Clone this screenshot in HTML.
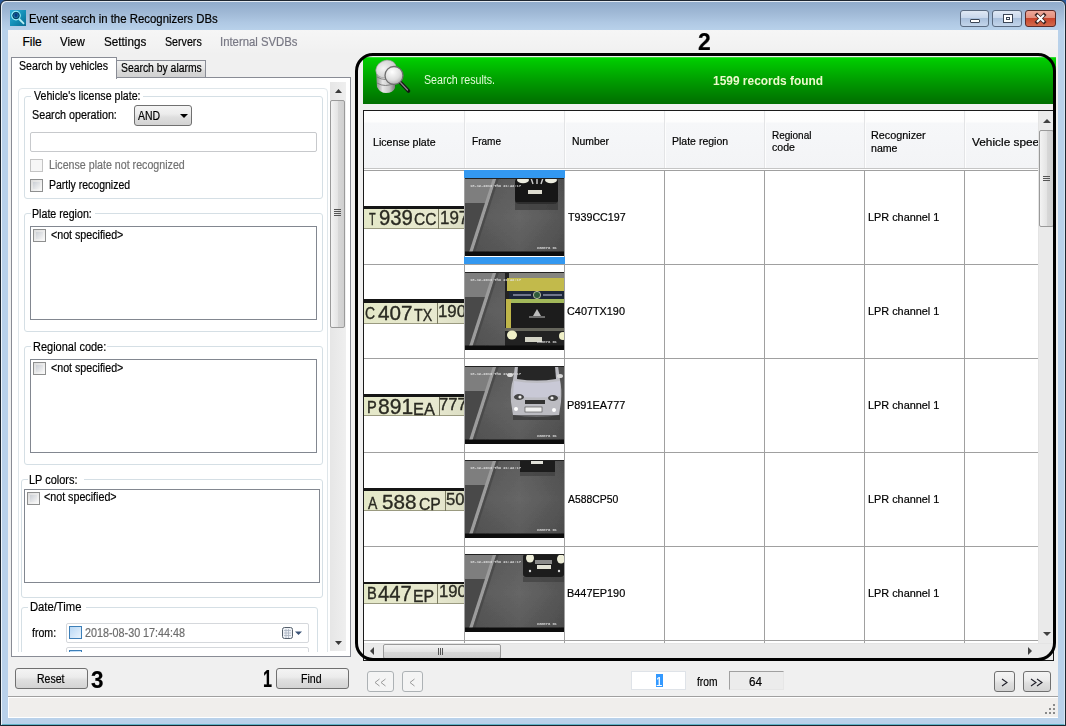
<!DOCTYPE html>
<html><head><meta charset="utf-8">
<style>
*{box-sizing:border-box}
html,body{margin:0;padding:0}
body{width:1066px;height:726px;position:relative;overflow:hidden;background:#2a5a9a;font-family:"Liberation Sans",sans-serif;font-size:12px;color:#000}
.a{position:absolute}
.t{position:absolute;white-space:nowrap;line-height:1;transform-origin:0 0;-webkit-text-stroke:0.2px currentColor}
#frame{left:0;top:0;width:1066px;height:726px;border:1px solid #1d2630;border-radius:6px 6px 0 0;box-shadow:inset 1px 1px 0 rgba(255,255,255,.75),inset -1px 0 0 rgba(255,255,255,.4),inset 0 -1px 0 #62b4c8;background:linear-gradient(#90abcb 0,#93aecd 3px,#a0b9d6 12px,#b0c9e4 22px,#b8d1ea 29px,#b9d1ea 100%)}
#client{left:8px;top:30px;width:1050px;height:688px;background:#f0f0f0}
.btnw{border:1px solid #5a6a80;border-radius:3px}
.chk{position:absolute;width:13px;height:13px;border:1px solid #8e8f8f;background:linear-gradient(135deg,#dcdcdc,#fafafa)}
.chk:after{content:"";position:absolute;left:2px;top:2px;width:7px;height:7px;background:linear-gradient(135deg,#cbcfd5,#f4f4f4)}
.nx:after{display:none}
.gb{position:absolute;border:1px solid #d5dfe5;border-radius:3px}
.lb{position:absolute;border:1px solid #828790;background:#fff}
.btn{position:absolute;border:1px solid #707070;border-radius:3px;background:linear-gradient(#f4f4f4 0,#ececec 42%,#dfdfdf 58%,#d3d3d3 100%)}
</style></head><body>
<div id="frame" class="a"></div>
<div class="a" style="left:10px;top:10px;width:16px;height:16px;background:linear-gradient(135deg,#32b0d8,#1590b8 50%,#0a6c92);">
<svg width="16" height="16" style="position:absolute;left:0;top:0"><circle cx="6" cy="5.6" r="4.3" fill="none" stroke="#9ff0f8" stroke-width="1.1"/><circle cx="6" cy="5.6" r="3.1" fill="#1a78a0" stroke="#0b3e60" stroke-width="1"/><path d="M4.6 3.6h2.8v2.4l-1.4 1.6-1.4-1.6z" fill="#0a3a8a"/><line x1="9.2" y1="9" x2="14" y2="13.8" stroke="#b8f0f4" stroke-width="1.8"/></svg>
</div>
<div class="t" style="left:29.25px;top:12.94px;font-size:12px;transform:scaleX(0.9495)">Event search in the Recognizers DBs</div>
<div class="a btnw" style="left:960px;top:10px;width:29px;height:17px;background:linear-gradient(#dfe8f4 0,#c9d8ec 45%,#aac0dc 50%,#c3d5ea 100%)"><div class="a" style="left:9px;top:8px;width:10px;height:4px;background:#fff;border:1px solid #3b4656;border-radius:1px"></div></div>
<div class="a btnw" style="left:992px;top:10px;width:30px;height:17px;background:linear-gradient(#dfe8f4 0,#c9d8ec 45%,#aac0dc 50%,#c3d5ea 100%)"><div class="a" style="left:10px;top:3px;width:10px;height:9px;background:#fff;border:1px solid #3b4656"><div class="a" style="left:2px;top:2px;width:4px;height:3px;border:1px solid #3b4656"></div></div></div>
<div class="a" style="left:1025px;top:10px;width:31px;height:17px;border:1px solid #5b2a28;border-radius:3px;background:linear-gradient(#eea899 0,#e3907e 45%,#c9452c 50%,#d46a4c 100%)">
<svg width="29" height="15" style="position:absolute;left:0;top:0"><path d="M11 4 L18 11 M18 4 L11 11" stroke="#3c2320" stroke-width="3.6" stroke-linecap="square"/><path d="M11 4 L18 11 M18 4 L11 11" stroke="#fff" stroke-width="2"/></svg>
</div>
<div id="client" class="a"></div>
<div class="a" style="left:8px;top:30px;width:1050px;height:24px;background:linear-gradient(#f6f6f6,#f2f2f2 70%,#f0f0f0)"></div>
<div class="t" style="left:22.40px;top:35.64px;font-size:12px">File</div>
<div class="t" style="left:60.00px;top:35.64px;font-size:12px;transform:scaleX(0.9585)">View</div>
<div class="t" style="left:104.01px;top:35.64px;font-size:12px;transform:scaleX(0.9741)">Settings</div>
<div class="t" style="left:165.16px;top:35.64px;font-size:12px;transform:scaleX(0.8889)">Servers</div>
<div class="t" style="left:219.94px;top:35.64px;font-size:12px;color:#787884;transform:scaleX(0.9441)">Internal SVDBs</div>
<div class="a" style="left:116px;top:60px;width:90px;height:18px;border:1px solid #898c95;border-bottom:none;background:linear-gradient(#f2f2f2,#e3e3e3 50%,#dadada 51%,#d0d0d0)"></div>
<div class="t" style="left:120.97px;top:62.34px;font-size:12px;transform:scaleX(0.8649)">Search by alarms</div>
<div class="a" style="left:11px;top:77px;width:340px;height:580px;border:1px solid #898c95;background:#fff"></div>
<div class="a" style="left:11px;top:57px;width:106px;height:22px;border:1px solid #898c95;border-bottom:none;background:#fff"></div>
<div class="t" style="left:19.26px;top:60.44px;font-size:12px;transform:scaleX(0.8841)">Search by vehicles</div>
<div class="a" style="left:12px;top:78px;width:338px;height:574px;overflow:hidden">
<div class="a" style="left:6px;top:10px;width:310px;height:600px;border:1px solid #dfe6ea;border-radius:4px"></div>
<div class="gb" style="left:12px;top:18px;width:299px;height:103px"></div>
<div class="a" style="left:19px;top:12px;width:112px;height:12px;background:#fff"></div>
<div class="t" style="left:21.80px;top:11.74px;font-size:12px;transform:scaleX(0.8847)">Vehicle's license plate:</div>
<div class="t" style="left:19.65px;top:30.54px;font-size:12px;transform:scaleX(0.8956)">Search operation:</div>
<div class="a" style="left:122px;top:27px;width:58px;height:21px;border:1px solid #707070;border-radius:3px;background:linear-gradient(#f4f4f4 0,#ececec 42%,#dfdfdf 58%,#d3d3d3 100%)"></div>
<div class="t" style="left:126.30px;top:31.84px;font-size:12px;transform:scaleX(0.8727)">AND</div>
<div class="a" style="left:168px;top:36px;width:0;height:0;border-left:4px solid transparent;border-right:4px solid transparent;border-top:4px solid #000"></div>
<div class="a" style="left:18px;top:54px;width:287px;height:20px;border:1px solid #c7c9cc;border-radius:2px;background:#fff"></div>
<div class="chk nx" style="left:18px;top:81px;border-color:#c4c4c4;background:#f6f6f6"></div>
<div class="t" style="left:36.71px;top:81.34px;font-size:12px;color:#727272;transform:scaleX(0.8887)">License plate not recognized</div>
<div class="chk" style="left:18px;top:101px"></div>
<div class="t" style="left:36.73px;top:101.34px;font-size:12px;transform:scaleX(0.8748)">Partly recognized</div>
<div class="gb" style="left:12px;top:135px;width:299px;height:119px"></div>
<div class="a" style="left:19px;top:130px;width:64px;height:10px;background:#fff"></div>
<div class="t" style="left:20.31px;top:129.64px;font-size:12px;transform:scaleX(0.8874)">Plate region:</div>
<div class="lb" style="left:18px;top:148px;width:287px;height:94px"></div>
<div class="chk" style="left:21px;top:151px"></div>
<div class="t" style="left:38.94px;top:150.64px;font-size:12px;transform:scaleX(0.8885)">&lt;not specified&gt;</div>
<div class="gb" style="left:12px;top:268px;width:299px;height:119px"></div>
<div class="a" style="left:19px;top:263px;width:76px;height:10px;background:#fff"></div>
<div class="t" style="left:20.68px;top:263.04px;font-size:12px;transform:scaleX(0.9154)">Regional code:</div>
<div class="lb" style="left:18px;top:281px;width:287px;height:94px"></div>
<div class="chk" style="left:21px;top:284px"></div>
<div class="t" style="left:38.94px;top:284.34px;font-size:12px;transform:scaleX(0.8885)">&lt;not specified&gt;</div>
<div class="gb" style="left:9px;top:401px;width:302px;height:119px"></div>
<div class="a" style="left:16px;top:396px;width:56px;height:10px;background:#fff"></div>
<div class="t" style="left:17.49px;top:395.64px;font-size:12px;transform:scaleX(0.9137)">LP colors:</div>
<div class="lb" style="left:12px;top:411px;width:296px;height:94px"></div>
<div class="chk" style="left:15px;top:414px"></div>
<div class="t" style="left:32.34px;top:413.44px;font-size:12px;transform:scaleX(0.8922)">&lt;not specified&gt;</div>
<div class="gb" style="left:9px;top:529px;width:297px;height:80px"></div>
<div class="a" style="left:16px;top:524px;width:58px;height:10px;background:#fff"></div>
<div class="t" style="left:17.66px;top:523.34px;font-size:12px;transform:scaleX(0.9368)">Date/Time</div>
<div class="t" style="left:20.09px;top:548.54px;font-size:12px;transform:scaleX(0.8804)">from:</div>
<div class="a" style="left:54px;top:545px;width:243px;height:20px;border:1px solid #d5d8dc;border-radius:2px;background:#fff"></div>
<div class="a" style="left:57px;top:548px;width:13px;height:13px;border:1px solid #3d7fb8;background:linear-gradient(135deg,#b9d8f5,#eaf4fd)"></div>
<div class="t" style="left:72.54px;top:548.84px;font-size:12px;color:#6d6d6d;transform:scaleX(0.8980)">2018-08-30 17:44:48</div>
<svg class="a" style="left:269px;top:548px" width="24" height="14"><rect x="1.5" y="1.5" width="10" height="11" rx="2" fill="#eef1f5" stroke="#55606c"/><path d="M3 4.5h7M3 7h7M3 9.5h7M5 3v9M7.5 3v9" stroke="#aab4c2" stroke-width="0.8"/><path d="M14 5.5h7l-3.5 3.5z" fill="#3a5276"/></svg>
<div class="a" style="left:54px;top:569px;width:243px;height:20px;border:1px solid #d5d8dc;border-radius:2px;background:#fff"></div>
<div class="a" style="left:57px;top:572px;width:13px;height:13px;border:1px solid #3d7fb8;background:linear-gradient(135deg,#b9d8f5,#eaf4fd)"></div>
<div class="a" style="left:318px;top:4px;width:16px;height:569px;background:linear-gradient(90deg,#e6e6e6,#efefef)"></div>
<svg class="a" style="left:322px;top:10px" width="9" height="6"><path d="M1 5 L4.5 1 L8 5z" fill="#3a3a3a"/></svg>
<div class="a" style="left:318px;top:22px;width:15px;height:228px;border:1px solid #9a9a9a;border-radius:2px;background:linear-gradient(90deg,#f3f3f3,#e4e4e4 50%,#d8d8d8 51%,#cfcfcf)"></div>
<div class="a" style="left:322px;top:131px;width:7px;height:7px;background:repeating-linear-gradient(#555 0 1px,transparent 1px 2px)"></div>
<svg class="a" style="left:322px;top:562px" width="9" height="6"><path d="M1 1 L8 1 L4.5 5z" fill="#3a3a3a"/></svg>
</div>
<div class="btn" style="left:15px;top:668px;width:73px;height:21px"></div>
<div class="t" style="left:36.82px;top:672.84px;font-size:12px;transform:scaleX(0.8760)">Reset</div>
<div class="btn" style="left:276px;top:668px;width:73px;height:21px"></div>
<div class="t" style="left:301.32px;top:672.84px;font-size:12px;transform:scaleX(0.8837)">Find</div>
<div class="t" style="left:90.53px;top:667.68px;font-size:24px;font-weight:bold;transform:scaleX(0.9333)">3</div>
<div class="t" style="left:262.89px;top:666.68px;font-size:24px;font-weight:bold;transform:scaleX(0.6756)">1</div>
<div class="a" style="left:8px;top:696px;width:1050px;height:1px;background:#a0a0a0"></div>
<div class="a" style="left:8px;top:697px;width:1050px;height:21px;background:#f0eeec;border:1px solid #fff;border-right:none"></div>

<div class="a" style="left:363px;top:57px;width:693px;height:47px;background:linear-gradient(#6be06b 0,#00d800 1px,#00c800 4px,#009a00 25px,#007000 46px)"></div>
<svg class="a" style="left:372px;top:58px" width="42" height="38">
 <defs><linearGradient id="cy" x1="0" x2="1"><stop offset="0" stop-color="#8a8a8a"/><stop offset="0.35" stop-color="#e8e8e8"/><stop offset="0.7" stop-color="#c8c8c8"/><stop offset="1" stop-color="#7a7a7a"/></linearGradient>
 <radialGradient id="gl" cx="0.4" cy="0.3" r="0.75"><stop offset="0" stop-color="#ffffff"/><stop offset="0.6" stop-color="#dedede"/><stop offset="1" stop-color="#a8a8a8"/></radialGradient>
 <radialGradient id="tp" cx="0.4" cy="0.4" r="0.7"><stop offset="0" stop-color="#f4f4f4"/><stop offset="1" stop-color="#c4c4c4"/></radialGradient></defs>
 <path d="M4 12 L5 29 Q8 35 14 35 Q21 35 23 30 L23 12z" fill="url(#cy)"/>
 <path d="M5 19 Q13 24 23 19 M5 25 Q13 30 23 25" fill="none" stroke="#777" stroke-width="0.9"/>
 <ellipse cx="14" cy="11" rx="10.5" ry="8.5" transform="rotate(-25 14 11)" fill="url(#tp)" stroke="#9a9a9a" stroke-width="0.6"/>
 <line x1="28" y1="24" x2="36.5" y2="33" stroke="#141414" stroke-width="3.6" stroke-linecap="round"/>
 <line x1="28" y1="24" x2="35.5" y2="32" stroke="#8a8a8a" stroke-width="1.2" stroke-linecap="round"/>
 <circle cx="22" cy="17.5" r="9" fill="url(#gl)" stroke="#6e6e6e" stroke-width="1.3"/>
</svg>
<div class="t" style="left:423.96px;top:73.84px;font-size:12px;color:#e2fbd8;transform:scaleX(0.8879);-webkit-text-stroke:0">Search results.</div>
<div class="t" style="left:712.75px;top:75.44px;font-size:12px;color:#ecf9cc;font-weight:bold;transform:scaleX(0.9943);-webkit-text-stroke:0">1599 records found</div>
<div class="a" style="left:363px;top:110px;width:691px;height:551px;border:1px solid #1a1a1a;background:#fff;overflow:hidden">
 <div class="a" style="left:0;top:0;width:674px;height:57px;background:linear-gradient(#fefefe 0,#fdfdfd 11px,#f6f7f9 12px,#f3f4f6 56px)"></div>
 <div class="a" style="left:0;top:57px;width:674px;height:1px;background:#c5c5c5"></div>
<div class="t" style="left:8.56px;top:25.59px;font-size:11px;transform:scaleX(0.9654)">License plate</div>
<div class="t" style="left:107.70px;top:25.39px;font-size:11px;transform:scaleX(0.9152)">Frame</div>
<div class="t" style="left:207.97px;top:25.39px;font-size:11px;transform:scaleX(0.9443)">Number</div>
<div class="t" style="left:307.76px;top:25.29px;font-size:11px;transform:scaleX(0.9558)">Plate region</div>
<div class="t" style="left:407.61px;top:18.69px;font-size:11px;transform:scaleX(0.9075)">Regional</div>
<div class="t" style="left:407.92px;top:31.09px;font-size:11px;transform:scaleX(0.9617)">code</div>
<div class="t" style="left:507.34px;top:18.59px;font-size:11px;transform:scaleX(0.9831)">Recognizer</div>
<div class="t" style="left:507.08px;top:31.79px;font-size:11px;transform:scaleX(0.9638)">name</div>
<div class="t" style="left:608.30px;top:25.89px;font-size:11px;transform:scaleX(1.0775)">Vehicle speed</div>
<div class="a" style="left:100px;top:0;width:1px;height:57px;background:#e3e4e6;box-shadow:1px 0 0 #fdfdfd"></div>
<div class="a" style="left:200px;top:0;width:1px;height:57px;background:#e3e4e6;box-shadow:1px 0 0 #fdfdfd"></div>
<div class="a" style="left:300px;top:0;width:1px;height:57px;background:#e3e4e6;box-shadow:1px 0 0 #fdfdfd"></div>
<div class="a" style="left:400px;top:0;width:1px;height:57px;background:#e3e4e6;box-shadow:1px 0 0 #fdfdfd"></div>
<div class="a" style="left:500px;top:0;width:1px;height:57px;background:#e3e4e6;box-shadow:1px 0 0 #fdfdfd"></div>
<div class="a" style="left:600px;top:0;width:1px;height:57px;background:#e3e4e6;box-shadow:1px 0 0 #fdfdfd"></div>
<div class="a" style="left:0;top:59px;width:674px;height:1px;background:#a0a0a0"></div>
<div class="a" style="left:0;top:153px;width:674px;height:1px;background:#a0a0a0"></div>
<div class="a" style="left:0;top:247px;width:674px;height:1px;background:#a0a0a0"></div>
<div class="a" style="left:0;top:341px;width:674px;height:1px;background:#a0a0a0"></div>
<div class="a" style="left:0;top:435px;width:674px;height:1px;background:#a0a0a0"></div>
<div class="a" style="left:0;top:529px;width:674px;height:1px;background:#a0a0a0"></div>
<div class="a" style="left:100px;top:59px;width:1px;height:480px;background:#a0a0a0"></div>
<div class="a" style="left:200px;top:59px;width:1px;height:480px;background:#a0a0a0"></div>
<div class="a" style="left:300px;top:59px;width:1px;height:480px;background:#a0a0a0"></div>
<div class="a" style="left:400px;top:59px;width:1px;height:480px;background:#a0a0a0"></div>
<div class="a" style="left:500px;top:59px;width:1px;height:480px;background:#a0a0a0"></div>
<div class="a" style="left:600px;top:59px;width:1px;height:480px;background:#a0a0a0"></div>
<div class="a" style="left:0;top:94px;width:100px;height:26px;overflow:hidden"><div class="a" style="left:0;top:1.0px;width:100px;height:2.5px;background:#151515"></div><div class="a" style="left:0;top:3.5px;width:100px;height:20.5px;background:linear-gradient(90deg,#e4e8c8,#e6e8cc 40%,#e8e9d0 70%,#dcdec4);border-bottom:1px solid #9a9a80"></div><div class="a" style="left:74.4px;top:3.5px;width:1px;height:20.5px;background:#7a7a60"></div><div class="t" style="left:5.06px;top:6.27px;font-size:17.4px;color:#2a2a22;transform:scaleX(0.6278);-webkit-text-stroke:0.35px #2a2a22">T</div>
<div class="t" style="left:14.66px;top:2.80px;font-size:21.5px;color:#2a2a22;transform:scaleX(0.9446);-webkit-text-stroke:0.35px #2a2a22">939</div>
<div class="t" style="left:49.92px;top:6.27px;font-size:17.4px;color:#2a2a22;transform:scaleX(0.8936);-webkit-text-stroke:0.35px #2a2a22">CC</div>
<div class="t" style="left:76.21px;top:3.68px;font-size:18.1px;color:#2a2a22;transform:scaleX(0.9369);-webkit-text-stroke:0.35px #2a2a22">197</div>
</div>
<div class="a" style="left:100px;top:59px;width:101px;height:8px;background:#3398f0"></div>
<div class="a" style="left:100px;top:146px;width:101px;height:7px;background:#3398f0"></div>
<div class="a" style="left:101px;top:67px;width:99px;height:78px"><svg width="99" height="78" viewBox="0 0 99 78" style="position:absolute;left:0;top:0"><defs><linearGradient id="rd0" x1="0" y1="0" x2="1" y2="0"><stop offset="0" stop-color="#575757"/><stop offset="0.55" stop-color="#666"/><stop offset="1" stop-color="#555"/></linearGradient>
<linearGradient id="rv0" x1="0" y1="0" x2="0" y2="1"><stop offset="0" stop-color="#000" stop-opacity="0.08"/><stop offset="0.5" stop-color="#000" stop-opacity="0"/><stop offset="1" stop-color="#000" stop-opacity="0.12"/></linearGradient>
<filter id="bl0" x="-5%" y="-5%" width="110%" height="110%"><feGaussianBlur stdDeviation="0.5"/></filter></defs>
<g filter="url(#bl0)">
<rect x="0" y="0" width="99" height="78" fill="url(#rd0)"/>
<rect x="0" y="0" width="99" height="78" fill="url(#rv0)"/>
<path d="M0 0 H29 L21 25 H0z" fill="#7e7e7e"/>
<path d="M0 25 H21 L5 76 H0z" fill="#4a4a4a"/>
<path d="M28 0 L31.5 0 L7 76 L3.5 76z" fill="#9c9c9c"/>
<path d="M31.5 0 L34 0 L9.5 76 L7 76z" fill="#454545" opacity="0.7"/>
<rect x="50" y="0" width="43" height="26" rx="4" fill="#161616"/>
<rect x="50" y="24" width="43" height="8" fill="#3a3a3a" opacity="0.7"/>
<ellipse cx="58" cy="2" rx="6" ry="3.2" fill="#ececdf"/><ellipse cx="86" cy="2" rx="6" ry="3.2" fill="#ececdf"/>
<path d="M66 0 L68 6 M72 0 L72 6 M78 0 L76 6" stroke="#cfcfcf" stroke-width="1.4"/>
<rect x="63" y="12" width="14" height="4" fill="#dedcd0"/><rect x="0" y="73.5" width="99" height="4.5" fill="#0c0c0c"/>
<rect x="0" y="0" width="99" height="1" fill="#222"/>
</g>
<text x="5" y="9" font-family="Liberation Mono" font-size="3.9" font-weight="bold" fill="#e4e4e4" opacity="0.9" textLength="51">18-12-2019 Thu 21:42:17</text>
<text x="72" y="70.5" font-family="Liberation Mono" font-size="4" font-weight="bold" fill="#e8e8e8" opacity="0.85" textLength="20">Camera 01</text>
</svg></div>
<div class="t" style="left:203.77px;top:101.27px;font-size:11.5px;transform:scaleX(0.9306)">T939CC197</div>
<div class="t" style="left:503.67px;top:101.27px;font-size:11.5px;transform:scaleX(0.9459)">LPR channel 1</div>
<div class="a" style="left:0;top:186.5px;width:100px;height:26px;overflow:hidden"><div class="a" style="left:0;top:1.0px;width:100px;height:4.5px;background:#151515"></div><div class="a" style="left:0;top:5.5px;width:100px;height:20.5px;background:linear-gradient(90deg,#e4e8c8,#e6e8cc 40%,#e8e9d0 70%,#dcdec4);border-bottom:1px solid #9a9a80"></div><div class="a" style="left:72.6px;top:5.5px;width:1px;height:20.5px;background:#7a7a60"></div><div class="t" style="left:1.26px;top:7.09px;font-size:16.2px;color:#2a2a22;transform:scaleX(0.8585);-webkit-text-stroke:0.35px #2a2a22">C</div>
<div class="t" style="left:13.51px;top:4.44px;font-size:21.1px;color:#2a2a22;transform:scaleX(0.9791);-webkit-text-stroke:0.35px #2a2a22">407</div>
<div class="t" style="left:50.37px;top:9.49px;font-size:16.2px;color:#2a2a22;transform:scaleX(0.8805);-webkit-text-stroke:0.35px #2a2a22">TX</div>
<div class="t" style="left:73.69px;top:6.76px;font-size:16.0px;color:#2a2a22;transform:scaleX(1.0505);-webkit-text-stroke:0.35px #2a2a22">190</div>
</div>
<div class="a" style="left:101px;top:161px;width:99px;height:78px"><svg width="99" height="78" viewBox="0 0 99 78" style="position:absolute;left:0;top:0"><defs><linearGradient id="rd1" x1="0" y1="0" x2="1" y2="0"><stop offset="0" stop-color="#575757"/><stop offset="0.55" stop-color="#666"/><stop offset="1" stop-color="#555"/></linearGradient>
<linearGradient id="rv1" x1="0" y1="0" x2="0" y2="1"><stop offset="0" stop-color="#000" stop-opacity="0.08"/><stop offset="0.5" stop-color="#000" stop-opacity="0"/><stop offset="1" stop-color="#000" stop-opacity="0.12"/></linearGradient>
<filter id="bl1" x="-5%" y="-5%" width="110%" height="110%"><feGaussianBlur stdDeviation="0.5"/></filter></defs>
<g filter="url(#bl1)">
<rect x="0" y="0" width="99" height="78" fill="url(#rd1)"/>
<rect x="0" y="0" width="99" height="78" fill="url(#rv1)"/>
<path d="M0 0 H29 L21 25 H0z" fill="#7e7e7e"/>
<path d="M0 25 H21 L5 76 H0z" fill="#4a4a4a"/>
<path d="M28 0 L31.5 0 L7 76 L3.5 76z" fill="#9c9c9c"/>
<path d="M31.5 0 L34 0 L9.5 76 L7 76z" fill="#454545" opacity="0.7"/>
<rect x="40" y="0" width="59" height="78" fill="#242424"/>
<rect x="44" y="0" width="55" height="6" fill="#858580"/>
<path d="M42 6 H99 V19 H42z" fill="#c2ba4c"/>
<rect x="44" y="19" width="55" height="8" fill="#1f2838"/>
<circle cx="72" cy="23" r="3.6" fill="#2e5a3a" stroke="#d4d4b8" stroke-width="0.8"/>
<path d="M48 23 H66 M78 23 H97" stroke="#8a90a8" stroke-width="1.6"/>
<rect x="42" y="27" width="57" height="4" fill="#a2b85a"/>
<rect x="41" y="27" width="5" height="30" fill="#bfb648"/>
<rect x="46" y="31" width="53" height="25" fill="#1c1c1c"/>
<path d="M68 44 L72 37 L76 44z" fill="#bdbdbd"/><path d="M64 45 H80" stroke="#bdbdbd" stroke-width="1"/>
<rect x="40" y="56" width="59" height="3" fill="#66665c"/>
<ellipse cx="47" cy="63" rx="5" ry="4.5" fill="#f0f0c8"/>
<ellipse cx="98" cy="64" rx="4" ry="4" fill="#f0f0c8"/>
<rect x="60" y="65" width="17" height="5" fill="#d4d4c6"/><rect x="0" y="73.5" width="99" height="4.5" fill="#0c0c0c"/>
<rect x="0" y="0" width="99" height="1" fill="#222"/>
</g>
<text x="5" y="9" font-family="Liberation Mono" font-size="3.9" font-weight="bold" fill="#e4e4e4" opacity="0.9" textLength="51">18-12-2019 Thu 21:42:17</text>
<text x="72" y="70.5" font-family="Liberation Mono" font-size="4" font-weight="bold" fill="#e8e8e8" opacity="0.85" textLength="20">Camera 01</text>
</svg></div>
<div class="t" style="left:203.41px;top:195.27px;font-size:11.5px;transform:scaleX(0.9441)">C407TX190</div>
<div class="t" style="left:503.67px;top:195.27px;font-size:11.5px;transform:scaleX(0.9459)">LPR channel 1</div>
<div class="a" style="left:0;top:282px;width:100px;height:26px;overflow:hidden"><div class="a" style="left:0;top:1.0px;width:100px;height:3.2px;background:#151515"></div><div class="a" style="left:0;top:4.2px;width:100px;height:19.3px;background:linear-gradient(90deg,#e4e8c8,#e6e8cc 40%,#e8e9d0 70%,#dcdec4);border-bottom:1px solid #9a9a80"></div><div class="a" style="left:74.6px;top:4.2px;width:1px;height:19.3px;background:#7a7a60"></div><div class="t" style="left:2.77px;top:6.09px;font-size:16.2px;color:#2a2a22;transform:scaleX(0.9043);-webkit-text-stroke:0.35px #2a2a22">P</div>
<div class="t" style="left:13.75px;top:3.35px;font-size:21.8px;color:#2a2a22;transform:scaleX(0.9658);-webkit-text-stroke:0.35px #2a2a22">891</div>
<div class="t" style="left:49.43px;top:8.49px;font-size:16.2px;color:#2a2a22;transform:scaleX(1.0123);-webkit-text-stroke:0.35px #2a2a22">EA</div>
<div class="t" style="left:75.14px;top:4.49px;font-size:16.9px;color:#2a2a22;transform:scaleX(0.9858);-webkit-text-stroke:0.35px #2a2a22">777</div>
</div>
<div class="a" style="left:101px;top:255px;width:99px;height:78px"><svg width="99" height="78" viewBox="0 0 99 78" style="position:absolute;left:0;top:0"><defs><linearGradient id="rd2" x1="0" y1="0" x2="1" y2="0"><stop offset="0" stop-color="#575757"/><stop offset="0.55" stop-color="#666"/><stop offset="1" stop-color="#555"/></linearGradient>
<linearGradient id="rv2" x1="0" y1="0" x2="0" y2="1"><stop offset="0" stop-color="#000" stop-opacity="0.08"/><stop offset="0.5" stop-color="#000" stop-opacity="0"/><stop offset="1" stop-color="#000" stop-opacity="0.12"/></linearGradient>
<filter id="bl2" x="-5%" y="-5%" width="110%" height="110%"><feGaussianBlur stdDeviation="0.5"/></filter></defs>
<g filter="url(#bl2)">
<rect x="0" y="0" width="99" height="78" fill="url(#rd2)"/>
<rect x="0" y="0" width="99" height="78" fill="url(#rv2)"/>
<path d="M0 0 H29 L21 25 H0z" fill="#7e7e7e"/>
<path d="M0 25 H21 L5 76 H0z" fill="#4a4a4a"/>
<path d="M28 0 L31.5 0 L7 76 L3.5 76z" fill="#9c9c9c"/>
<path d="M31.5 0 L34 0 L9.5 76 L7 76z" fill="#454545" opacity="0.7"/>
<path d="M50 0 H93 L95 14 Q97 22 96 36 L94 49 Q72 53 48 49 L46 36 Q45 22 48 14z" fill="#bcbcc2"/>
<path d="M53 0 H90 L91 13 Q72 16 52 13z" fill="#262626"/>
<path d="M49 15 Q72 19 95 15 L95 30 Q72 33 48 30z" fill="#c9c9d6"/>
<ellipse cx="54" cy="31" rx="5" ry="3" fill="#444"/><ellipse cx="88" cy="32" rx="5" ry="3" fill="#444"/>
<circle cx="55" cy="31" r="1.6" fill="#eee"/><circle cx="87" cy="32" r="1.6" fill="#eee"/>
<rect x="60" y="34" width="20" height="4" fill="#333"/>
<rect x="60" y="41" width="17" height="5" fill="#f0f0f0" stroke="#444" stroke-width="0.6"/>
<circle cx="51" cy="43" r="2" fill="#fff"/><circle cx="89" cy="44" r="2" fill="#fff"/>
<ellipse cx="45" cy="9" rx="3" ry="2" fill="#d8d8d8"/><ellipse cx="95" cy="10" rx="3" ry="2" fill="#d8d8d8"/>
<rect x="48" y="49" width="47" height="5" fill="#2e2e2e" opacity="0.6"/><rect x="0" y="73.5" width="99" height="4.5" fill="#0c0c0c"/>
<rect x="0" y="0" width="99" height="1" fill="#222"/>
</g>
<text x="5" y="9" font-family="Liberation Mono" font-size="3.9" font-weight="bold" fill="#e4e4e4" opacity="0.9" textLength="51">18-12-2019 Thu 21:42:17</text>
<text x="72" y="70.5" font-family="Liberation Mono" font-size="4" font-weight="bold" fill="#e8e8e8" opacity="0.85" textLength="20">Camera 01</text>
</svg></div>
<div class="t" style="left:203.17px;top:289.27px;font-size:11.5px;transform:scaleX(0.9500)">P891EA777</div>
<div class="t" style="left:503.67px;top:289.27px;font-size:11.5px;transform:scaleX(0.9459)">LPR channel 1</div>
<div class="a" style="left:0;top:376.3px;width:100px;height:26px;overflow:hidden"><div class="a" style="left:0;top:1.0px;width:100px;height:2.9px;background:#151515"></div><div class="a" style="left:0;top:3.9px;width:100px;height:19.8px;background:linear-gradient(90deg,#e4e8c8,#e6e8cc 40%,#e8e9d0 70%,#dcdec4);border-bottom:1px solid #9a9a80"></div><div class="a" style="left:80.9px;top:3.9px;width:1px;height:19.8px;background:#7a7a60"></div><div class="t" style="left:4.30px;top:7.29px;font-size:16.2px;color:#2a2a22;transform:scaleX(0.8651);-webkit-text-stroke:0.35px #2a2a22">A</div>
<div class="t" style="left:17.64px;top:3.22px;font-size:21.0px;color:#2a2a22;transform:scaleX(0.9835);-webkit-text-stroke:0.35px #2a2a22">588</div>
<div class="t" style="left:54.88px;top:8.62px;font-size:16.4px;color:#2a2a22;transform:scaleX(0.9600);-webkit-text-stroke:0.35px #2a2a22">CP</div>
<div class="t" style="left:81.78px;top:4.29px;font-size:16.9px;color:#2a2a22;transform:scaleX(0.9886);-webkit-text-stroke:0.35px #2a2a22">50</div>
</div>
<div class="a" style="left:101px;top:349px;width:99px;height:78px"><svg width="99" height="78" viewBox="0 0 99 78" style="position:absolute;left:0;top:0"><defs><linearGradient id="rd3" x1="0" y1="0" x2="1" y2="0"><stop offset="0" stop-color="#575757"/><stop offset="0.55" stop-color="#666"/><stop offset="1" stop-color="#555"/></linearGradient>
<linearGradient id="rv3" x1="0" y1="0" x2="0" y2="1"><stop offset="0" stop-color="#000" stop-opacity="0.08"/><stop offset="0.5" stop-color="#000" stop-opacity="0"/><stop offset="1" stop-color="#000" stop-opacity="0.12"/></linearGradient>
<filter id="bl3" x="-5%" y="-5%" width="110%" height="110%"><feGaussianBlur stdDeviation="0.5"/></filter></defs>
<g filter="url(#bl3)">
<rect x="0" y="0" width="99" height="78" fill="url(#rd3)"/>
<rect x="0" y="0" width="99" height="78" fill="url(#rv3)"/>
<path d="M0 0 H29 L21 25 H0z" fill="#7e7e7e"/>
<path d="M0 25 H21 L5 76 H0z" fill="#4a4a4a"/>
<path d="M28 0 L31.5 0 L7 76 L3.5 76z" fill="#9c9c9c"/>
<path d="M31.5 0 L34 0 L9.5 76 L7 76z" fill="#454545" opacity="0.7"/>
<rect x="55" y="0" width="35" height="12" fill="#1a1a1a"/>
<rect x="66" y="0" width="12" height="4" fill="#e2e2da"/>
<rect x="55" y="12" width="35" height="4" fill="#3a3a3a" opacity="0.6"/><rect x="0" y="73.5" width="99" height="4.5" fill="#0c0c0c"/>
<rect x="0" y="0" width="99" height="1" fill="#222"/>
</g>
<text x="5" y="9" font-family="Liberation Mono" font-size="3.9" font-weight="bold" fill="#e4e4e4" opacity="0.9" textLength="51">18-12-2019 Thu 21:42:17</text>
<text x="72" y="70.5" font-family="Liberation Mono" font-size="4" font-weight="bold" fill="#e8e8e8" opacity="0.85" textLength="20">Camera 01</text>
</svg></div>
<div class="t" style="left:204.00px;top:383.27px;font-size:11.5px;transform:scaleX(0.9050)">A588CP50</div>
<div class="t" style="left:503.67px;top:383.27px;font-size:11.5px;transform:scaleX(0.9459)">LPR channel 1</div>
<div class="a" style="left:0;top:469.79999999999995px;width:100px;height:26px;overflow:hidden"><div class="a" style="left:0;top:1.0px;width:100px;height:2.2px;background:#151515"></div><div class="a" style="left:0;top:3.2px;width:100px;height:20.0px;background:linear-gradient(90deg,#e4e8c8,#e6e8cc 40%,#e8e9d0 70%,#dcdec4);border-bottom:1px solid #9a9a80"></div><div class="a" style="left:73.1px;top:3.2px;width:1px;height:20.0px;background:#7a7a60"></div><div class="t" style="left:2.71px;top:5.69px;font-size:16.9px;color:#2a2a22;transform:scaleX(0.8667);-webkit-text-stroke:0.35px #2a2a22">B</div>
<div class="t" style="left:14.14px;top:2.55px;font-size:21.8px;color:#2a2a22;transform:scaleX(0.9266);-webkit-text-stroke:0.35px #2a2a22">447</div>
<div class="t" style="left:48.97px;top:7.69px;font-size:16.2px;color:#2a2a22;transform:scaleX(0.9806);-webkit-text-stroke:0.35px #2a2a22">EP</div>
<div class="t" style="left:74.76px;top:3.19px;font-size:16.9px;color:#2a2a22;transform:scaleX(0.9905);-webkit-text-stroke:0.35px #2a2a22">190</div>
</div>
<div class="a" style="left:101px;top:443px;width:99px;height:78px"><svg width="99" height="78" viewBox="0 0 99 78" style="position:absolute;left:0;top:0"><defs><linearGradient id="rd4" x1="0" y1="0" x2="1" y2="0"><stop offset="0" stop-color="#575757"/><stop offset="0.55" stop-color="#666"/><stop offset="1" stop-color="#555"/></linearGradient>
<linearGradient id="rv4" x1="0" y1="0" x2="0" y2="1"><stop offset="0" stop-color="#000" stop-opacity="0.08"/><stop offset="0.5" stop-color="#000" stop-opacity="0"/><stop offset="1" stop-color="#000" stop-opacity="0.12"/></linearGradient>
<filter id="bl4" x="-5%" y="-5%" width="110%" height="110%"><feGaussianBlur stdDeviation="0.5"/></filter></defs>
<g filter="url(#bl4)">
<rect x="0" y="0" width="99" height="78" fill="url(#rd4)"/>
<rect x="0" y="0" width="99" height="78" fill="url(#rv4)"/>
<path d="M0 0 H29 L21 25 H0z" fill="#7e7e7e"/>
<path d="M0 25 H21 L5 76 H0z" fill="#4a4a4a"/>
<path d="M28 0 L31.5 0 L7 76 L3.5 76z" fill="#9c9c9c"/>
<path d="M31.5 0 L34 0 L9.5 76 L7 76z" fill="#454545" opacity="0.7"/>
<rect x="58" y="0" width="41" height="23" rx="3" fill="#1c1c1c"/>
<ellipse cx="65" cy="4" rx="4" ry="4.5" fill="#ededd8"/><ellipse cx="96" cy="5" rx="4" ry="4.5" fill="#ededd8"/>
<rect x="70" y="6" width="17" height="4" fill="#8a8a8a"/>
<rect x="72" y="11" width="14" height="4" fill="#e2e2d6"/>
<circle cx="65" cy="17" r="1.2" fill="#ddd"/><circle cx="94" cy="17" r="1.2" fill="#ddd"/>
<rect x="58" y="23" width="41" height="5" fill="#3a3a3a" opacity="0.6"/><rect x="0" y="73.5" width="99" height="4.5" fill="#0c0c0c"/>
<rect x="0" y="0" width="99" height="1" fill="#222"/>
</g>
<text x="5" y="9" font-family="Liberation Mono" font-size="3.9" font-weight="bold" fill="#e4e4e4" opacity="0.9" textLength="51">18-12-2019 Thu 21:42:17</text>
<text x="72" y="70.5" font-family="Liberation Mono" font-size="4" font-weight="bold" fill="#e8e8e8" opacity="0.85" textLength="20">Camera 01</text>
</svg></div>
<div class="t" style="left:203.17px;top:477.27px;font-size:11.5px;transform:scaleX(0.9480)">B447EP190</div>
<div class="t" style="left:503.67px;top:477.27px;font-size:11.5px;transform:scaleX(0.9459)">LPR channel 1</div>

 <div class="a" style="left:674px;top:0;width:16px;height:532px;background:#eaeaea;border-left:1px solid #e4e4e4"></div>
 <div class="a" style="left:679px;top:8px;width:0;height:0;border-left:4px solid transparent;border-right:4px solid transparent;border-bottom:4px solid #404040"></div>
 <div class="a" style="left:675px;top:19px;width:15px;height:97px;border:1px solid #9a9a9a;border-radius:2px;background:linear-gradient(90deg,#f3f3f3,#e4e4e4 50%,#d8d8d8 51%,#cfcfcf)"></div>
 <div class="a" style="left:679px;top:65px;width:7px;height:6px;background:repeating-linear-gradient(#555 0 1px,transparent 1px 2px)"></div>
 <div class="a" style="left:679px;top:521px;width:0;height:0;border-left:4px solid transparent;border-right:4px solid transparent;border-top:4px solid #404040"></div>
 <div class="a" style="left:0;top:532px;width:690px;height:17px;background:#eaeaea;border-top:1px solid #e4e4e4"></div>
 <div class="a" style="left:6px;top:536px;width:0;height:0;border-top:4px solid transparent;border-bottom:4px solid transparent;border-right:4px solid #404040"></div>
 <div class="a" style="left:19px;top:533px;width:118px;height:15px;border:1px solid #9a9a9a;border-radius:2px;background:linear-gradient(#f3f3f3,#e4e4e4 50%,#d8d8d8 51%,#cfcfcf)"></div>
 <div class="a" style="left:74px;top:537px;width:6px;height:7px;background:repeating-linear-gradient(90deg,#555 0 1px,transparent 1px 2px)"></div>
 <div class="a" style="left:664px;top:536px;width:0;height:0;border-top:4px solid transparent;border-bottom:4px solid transparent;border-left:4px solid #404040"></div>
</div>
<div class="a" style="left:355px;top:53px;width:701px;height:608px;border:3px solid #000;border-radius:18px"></div>
<div class="t" style="left:698.08px;top:30.48px;font-size:24px;font-weight:bold;transform:scaleX(0.9548)">2</div>
<div class="a" style="left:367px;top:671px;width:27px;height:21px;border:1px solid #adb2b5;border-radius:3px;background:#f4f4f4"></div>
<svg class="a" style="left:374px;top:678px" width="14" height="10"><path d="M5.5 1 L1 4.5 L5.5 8 M11.5 1 L7 4.5 L11.5 8" fill="none" stroke="#9a9a9a" stroke-width="1"/></svg>
<div class="a" style="left:402px;top:671px;width:21px;height:21px;border:1px solid #adb2b5;border-radius:3px;background:#f4f4f4"></div>
<svg class="a" style="left:409px;top:678px" width="8" height="10"><path d="M5.5 1 L1 4.5 L5.5 8" fill="none" stroke="#9a9a9a" stroke-width="1"/></svg>
<div class="a" style="left:631px;top:671px;width:55px;height:19px;border:1px solid #dfe3e8;background:#fff"></div>
<div class="a" style="left:656px;top:674px;width:7px;height:13px;background:#3399ff"></div>
<div class="t" style="left:656.17px;top:675.54px;font-size:12px;color:#fff;transform:scaleX(0.9524)">1</div>
<div class="t" style="left:697.29px;top:675.54px;font-size:12px;transform:scaleX(0.8519)">from</div>
<div class="a" style="left:729px;top:671px;width:55px;height:19px;border:1px solid #e6e6e6;border-top-color:#a0a0a0;border-left-color:#a0a0a0;background:#ececec"></div>
<div class="t" style="left:749.39px;top:675.54px;font-size:12px;transform:scaleX(0.9697)">64</div>
<div class="btn" style="left:994px;top:671px;width:21px;height:21px"></div>
<svg class="a" style="left:1001px;top:678px" width="8" height="10"><path d="M1 1 L6 4.5 L1 8" fill="none" stroke="#20202a" stroke-width="1.1"/></svg>
<div class="btn" style="left:1023px;top:671px;width:28px;height:21px"></div>
<svg class="a" style="left:1030px;top:678px" width="14" height="10"><path d="M1 1 L6 4.5 L1 8 M7 1 L12 4.5 L7 8" fill="none" stroke="#20202a" stroke-width="1.1"/></svg>
<svg class="a" style="left:1045px;top:704px" width="11" height="11"><g fill="#8a8a8a"><rect x="8" y="0" width="2" height="2"/><rect x="4" y="4" width="2" height="2"/><rect x="8" y="4" width="2" height="2"/><rect x="0" y="8" width="2" height="2"/><rect x="4" y="8" width="2" height="2"/><rect x="8" y="8" width="2" height="2"/></g></svg>
</body></html>
